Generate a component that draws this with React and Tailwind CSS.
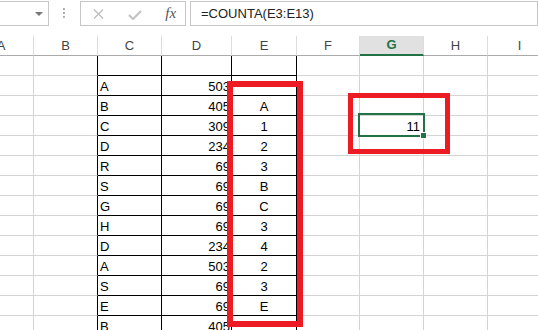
import React from "react";

// column widths include the 1px right gridline
const COLS = [
  { id: "A", w: "w-[65px]" },
  { id: "B", w: "w-[64px]" },
  { id: "C", w: "w-[64px]" },
  { id: "D", w: "w-[70px]" },
  { id: "E", w: "w-[65px]" },
  { id: "F", w: "w-[63px]" },
  { id: "G", w: "w-[64px]" },
  { id: "H", w: "w-[64px]" },
  { id: "I", w: "w-[64px]" },
];

// C, D, E and G values, row 1 to 14
const ROWS = [
  ["", "", "", ""],
  ["A", "503", "", ""],
  ["B", "405", "A", ""],
  ["C", "309", "1", "11"],
  ["D", "234", "2", ""],
  ["R", "69", "3", ""],
  ["S", "69", "B", ""],
  ["G", "69", "C", ""],
  ["H", "69", "3", ""],
  ["D", "234", "4", ""],
  ["A", "503", "2", ""],
  ["S", "69", "3", ""],
  ["E", "69", "E", ""],
  ["B", "405", "", ""],
];

const lineCls = (i) => {
  if (i >= 2 && i <= 4) return "border-black";
  if (i === 1) return "border-[#d4d4d4] border-r-black";
  return "border-[#d4d4d4]";
};

const alignCls = (i) => {
  if (i === 2) return "justify-start pl-[2px]";
  if (i === 3) return "justify-end pr-[1px]";
  if (i === 6) return "justify-end pr-[3px]";
  return "justify-center";
};

const cellValue = (row, i) => {
  if (i === 2) return row[0];
  if (i === 3) return row[1];
  if (i === 4) return row[2];
  if (i === 6) return row[3];
  return "";
};

const FormulaBar = () => (
  <div className="flex h-[26px] items-start pt-[1px]">
    {/* name box */}
    <div className="ml-[-1px] flex h-[25px] w-[52px] items-center justify-end border border-[#c6c6c6] pr-[5px]">
      <svg width="8" height="4" viewBox="0 0 8 4">
        <path d="M0 0h8L4 4z" fill="#777" />
      </svg>
    </div>
    <svg className="ml-[14px] mt-[7px]" width="3" height="11" viewBox="0 0 3 11">
      <rect x="0" y="0" width="2" height="2" fill="#a8a8a8" />
      <rect x="0" y="4" width="2" height="2" fill="#a8a8a8" />
      <rect x="0" y="8" width="2" height="2" fill="#a8a8a8" />
    </svg>
    {/* cancel / enter / insert function */}
    <div className="ml-[14px] flex h-[25px] w-[109px] items-center border border-[#c6c6c6] pl-[12px]">
      <svg width="11" height="10" viewBox="0 0 11 10">
        <path d="M1 0.5l9 9M10 0.5l-9 9" stroke="#bdbdbd" strokeWidth="1.3" fill="none" />
      </svg>
      <svg className="ml-[24px] mt-[2px]" width="14" height="10" viewBox="0 0 14 10">
        <path d="M1 5l4 4 8-8" stroke="#c4c4c4" strokeWidth="2.2" fill="none" />
      </svg>
      <span className="ml-[23px] font-['Liberation_Serif',serif] text-[15px] italic leading-none text-[#555]">
        fx
      </span>
    </div>
    {/* formula input */}
    <div className="ml-[4px] flex h-[25px] w-[360px] items-center border border-[#c6c6c6] pl-[10px] text-[13px] text-[#222]">
      =COUNTA(E3:E13)
    </div>
  </div>
);

export default function App() {
  return (
    <div className="relative h-[330px] w-[538px] overflow-hidden bg-white font-['Liberation_Sans',Arial,sans-serif]">
      <FormulaBar />

      <div className="ml-[-31px] mt-[10px] flex flex-col">
        {/* column headers */}
        <div className="flex h-[20px]">
          {COLS.map((c, i) =>
            i === 6 ? (
              <div
                key={c.id}
                className={`${c.w} flex shrink-0 items-center justify-center border-r border-b-2 border-r-[#dcdcdc] border-b-[#217346] bg-[#e1e1e1] text-[13px] font-bold text-[#217346]`}
              >
                {c.id}
              </div>
            ) : (
              <div
                key={c.id}
                className={`${c.w} flex shrink-0 items-center justify-center border-r border-b border-r-[#dcdcdc] border-b-[#ababab] text-[13px] text-[#444]`}
              >
                {c.id}
              </div>
            )
          )}
        </div>

        {/* cells */}
        {ROWS.map((row, r) => (
          <div key={r} className="flex h-[20px]">
            {COLS.map((c, i) => (
              <div
                key={c.id}
                className={`${c.w} ${lineCls(i)} ${alignCls(i)} flex shrink-0 items-end border-r border-b text-[13px] leading-4 text-black`}
              >
                {cellValue(row, i)}
              </div>
            ))}
          </div>
        ))}
      </div>

      {/* active cell G4 */}
      <div className="absolute left-[358px] top-[113px] h-[24px] w-[67px] border-2 border-[#217346]" />
      <div className="absolute left-[420px] top-[132px] h-[7px] w-[7px] border border-white bg-[#217346]" />

      {/* red highlight boxes */}
      <div className="absolute left-[227px] top-[81px] h-[246px] w-[76px] border-[6px] border-[#ed1c24]" />
      <div className="absolute left-[348px] top-[93px] h-[61px] w-[102px] border-[5px] border-[#ed1c24]" />
    </div>
  );
}
